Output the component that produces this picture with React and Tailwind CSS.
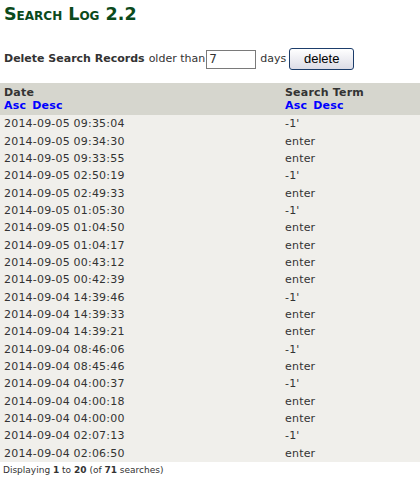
import React from "react";

const rows = [
  ["2014-09-05 09:35:04", "-1'"],
  ["2014-09-05 09:34:30", "enter"],
  ["2014-09-05 09:33:55", "enter"],
  ["2014-09-05 02:50:19", "-1'"],
  ["2014-09-05 02:49:33", "enter"],
  ["2014-09-05 01:05:30", "-1'"],
  ["2014-09-05 01:04:50", "enter"],
  ["2014-09-05 01:04:17", "enter"],
  ["2014-09-05 00:43:12", "enter"],
  ["2014-09-05 00:42:39", "enter"],
  ["2014-09-04 14:39:46", "-1'"],
  ["2014-09-04 14:39:33", "enter"],
  ["2014-09-04 14:39:21", "enter"],
  ["2014-09-04 08:46:06", "-1'"],
  ["2014-09-04 08:45:46", "enter"],
  ["2014-09-04 04:00:37", "-1'"],
  ["2014-09-04 04:00:18", "enter"],
  ["2014-09-04 04:00:00", "enter"],
  ["2014-09-04 02:07:13", "-1'"],
  ["2014-09-04 02:06:50", "enter"],
];

export default function App() {
  return (
    <div className="w-[420px] h-[480px] bg-white text-[#333] text-[11px] tracking-[0.2px] font-['Verdana','DejaVu_Sans',sans-serif] overflow-hidden">
      <h1 className="px-1 pt-[4px] text-[17.5px] leading-[21px] font-bold tracking-normal text-[#0b4a1c] [font-variant:small-caps]">
        Search Log 2.2
      </h1>

      <div className="flex items-center px-1 mt-[22px] h-[24px] tracking-normal">
        <span className="font-bold">Delete Search Records</span>
        <span className="ml-[4px]">older than</span>
        <input
          defaultValue="7"
          className="ml-[1px] w-[50px] h-[19px] border border-[#7a7a7a] px-[2px] text-[12px] outline-none"
        />
        <span className="ml-[4px]">days</span>
        <button className="ml-[3px] w-[65px] h-[22px] rounded-[3px] border border-[#1c3d6b] bg-gradient-to-b from-white to-[#dcdce6] text-[13px] text-black font-['Liberation_Sans',sans-serif]">
          delete
        </button>
      </div>

      <table className="w-full mt-[12px] border-collapse">
        <thead>
          <tr className="bg-[#d6d6ce] align-top">
            <th className="w-[281px] text-left font-bold px-1 pt-[3px] pb-[3px] leading-[13px]">
              Date
              <div className="flex gap-[6px] text-[#0000ff]">
                <a>Asc</a>
                <a>Desc</a>
              </div>
            </th>
            <th className="text-left font-bold px-1 pt-[3px] pb-[3px] leading-[13px]">
              Search Term
              <div className="flex gap-[6px] text-[#0000ff]">
                <a>Asc</a>
                <a>Desc</a>
              </div>
            </th>
          </tr>
        </thead>
        <tbody>
          {rows.map(([date, term], i) => (
            <tr key={i} className="bg-[#f0efeb] h-[17.35px]">
              <td className="px-1 leading-[13px]">{date}</td>
              <td className="px-1 leading-[13px]">{term}</td>
            </tr>
          ))}
        </tbody>
      </table>

      <div className="px-[3px] pt-[2px] text-[9px] tracking-normal">
        Displaying <b>1</b> to <b>20</b> (of <b>71</b> searches)
      </div>
    </div>
  );
}
